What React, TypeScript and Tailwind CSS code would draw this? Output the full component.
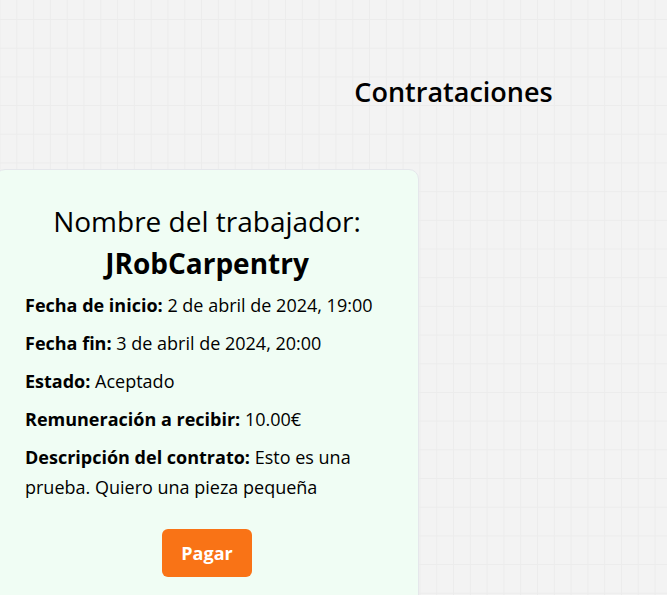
export default function App() {
  const rows = [
    { label: "Fecha de inicio:", value: "2 de abril de 2024, 19:00" },
    { label: "Fecha fin:", value: "3 de abril de 2024, 20:00" },
    { label: "Estado:", value: "Aceptado" },
    { label: "Remuneración a recibir:", value: "10.00€" },
    { label: "Descripción del contrato:", value: "Esto es una prueba. Quiero una pieza pequeña" },
  ];

  return (
    <div className="min-h-screen overflow-hidden bg-[#f3f3f3] bg-[linear-gradient(to_right,#ececec_1px,transparent_1px),linear-gradient(to_bottom,#ececec_1px,transparent_1px)] bg-[size:16.8px_28.7px] bg-[position:-0.5px_19px] font-['Open_Sans',sans-serif] text-black">
      {/* Header */}
      <div className="pt-[73px] pl-[240px]">
        <h1 className="text-center text-[27px] font-semibold leading-[38px]">Contrataciones</h1>
      </div>

      {/* Card */}
      <div className="mt-[58px] -ml-[5px] w-[424px] rounded-[10px] border border-[#e5e7eb] bg-[#f0fdf4] px-[29px] pt-[30px] pb-[40px]">
        <h2 className="text-center text-[28px] leading-[42px]">Nombre del trabajador:</h2>
        <p className="text-center text-[28px] font-bold leading-[42px]">JRobCarpentry</p>

        <div className="mt-[6px]">
          {rows.map((r) => (
            <p key={r.label} className="mb-[8px] text-[18px] leading-[30px]">
              <span className="font-bold">{r.label}</span> {r.value}
            </p>
          ))}
        </div>

        <div className="mt-[27px] flex justify-center">
          <button className="h-[48px] w-[90px] rounded-md bg-[#f97316] text-[18px] font-bold text-white">
            Pagar
          </button>
        </div>
      </div>
    </div>
  );
}
